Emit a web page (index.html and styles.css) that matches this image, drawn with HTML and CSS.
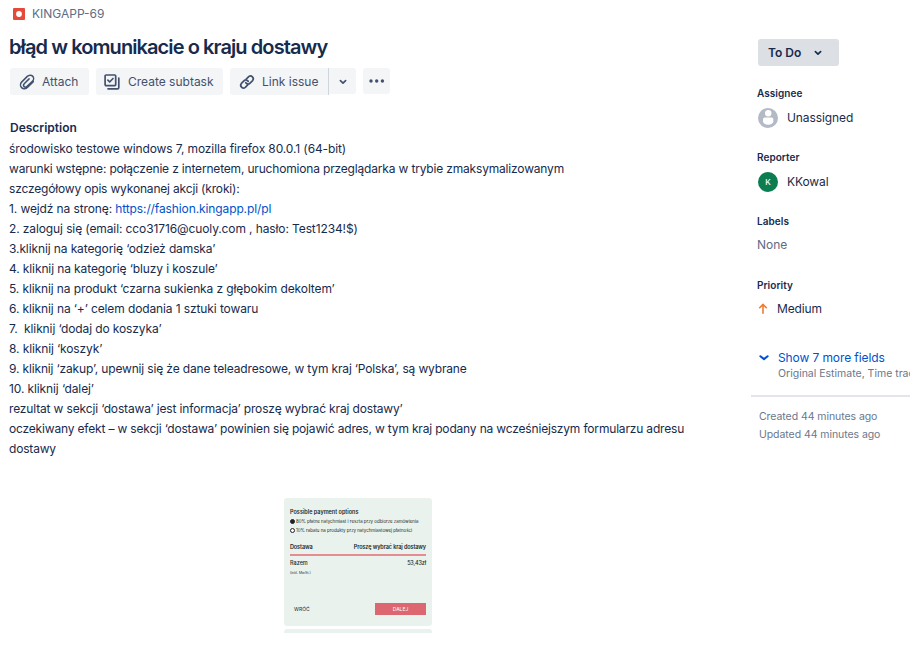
FILE: index.html
```html
<!DOCTYPE html>
<html lang="pl">
<head>
<meta charset="utf-8">
<title>KINGAPP-69</title>
<link rel="stylesheet" href="styles.css">
</head>
<body>
<div class="issue">
  <main class="main">
    <div class="crumb">
      <svg width="12" height="12" viewBox="0 0 12 12"><rect width="12" height="12" rx="1" fill="#e5493a"/><circle cx="6" cy="6" r="2.9" fill="#fff"/></svg>
      <span>KINGAPP-69</span>
    </div>
    <h1 class="title">błąd w komunikacie o kraju dostawy</h1>
    <div class="toolbar">
      <button class="btn attach">
        <svg width="16" height="16" viewBox="0 0 16 16"><path d="M14.300 7.600l-5.700 5.600c-1.700 1.700-4.400 2-6 .4s-1.400-4.100.2-5.700l5.500-5.500c1.500-1.500 3.900-1.700 5.300-.3s1.300 3.700-.2 5.200L8.100 12.400c-.9.9-2.200 1-3 .2s-.7-2 .1-2.800l4.900-4.900"/></svg>
        <span>Attach</span>
      </button>
      <button class="btn subtask">
        <svg width="16" height="16" viewBox="0 0 16 16"><rect x="1.100" y="1" width="10.600" height="10.600" rx="1"/><path d="m3.900 6.200 1.800 1.800L9 4.500M14.800 4.200v9.200c0 .9-.5 1.400-1.400 1.400H4"/></svg>
        <span>Create subtask</span>
      </button>
      <div class="split">
        <button class="btn link">
          <svg width="18" height="18" viewBox="0 0 24 24"><path d="m11 8.200 3.300-3.300a3.700 3.700 0 0 1 5.200 5.200l-3.400 3.400a3.700 3.700 0 0 1-5.200 0l-.5-.6M13 15.800l-3.300 3.300a3.700 3.700 0 0 1-5.200-5.200l3.400-3.400a3.700 3.700 0 0 1 5.200 0l.5.6"/></svg>
          <span>Link issue</span>
        </button>
        <button class="btn drop"><svg width="8" height="6" viewBox="0 0 8 6"><path d="m1.400 1.700 2.600 2.400 2.600-2.400"/></svg></button>
      </div>
      <button class="btn more"><svg width="16" height="4" viewBox="0 0 16 4"><circle cx="2" cy="2" r="1.700"/><circle cx="7.700" cy="2" r="1.700"/><circle cx="13.400" cy="2" r="1.700"/></svg></button>
    </div>
    <h2 class="heading">Description</h2>
    <div class="description">
      <p class="loose">środowisko testowe windows 7, mozilla firefox 80.0.1 (64-bit)</p>
      <p class="tight">warunki wstępne: połączenie z internetem, uruchomiona przeglądarka w trybie zmaksymalizowanym</p>
      <p class="tight">szczegółowy opis wykonanej akcji (kroki):</p>
      <p class="loose">1. wejdź na stronę: <a>https://fashion.kingapp.pl/pl</a></p>
      <p class="loose">2. zaloguj się (email: cco31716@cuoly.com , hasło: Test1234!$)</p>
      <p class="loose">3.kliknij na kategorię ‘odzież damska’</p>
      <p class="loose">4. kliknij na kategorię ‘bluzy i koszule’</p>
      <p class="loose">5. kliknij na produkt ‘czarna sukienka z głębokim dekoltem’</p>
      <p class="loose">6. kliknij na ‘+’ celem dodania 1 sztuki towaru</p>
      <p class="loose">7.&nbsp; kliknij ‘dodaj do koszyka’</p>
      <p class="loose">8. kliknij ‘koszyk’</p>
      <p>9. kliknij ‘zakup’, upewnij się że dane teleadresowe, w tym kraj ‘Polska’, są wybrane</p>
      <p class="loose">10. kliknij ‘dalej’</p>
      <p>rezultat w sekcji ‘dostawa’ jest informacja’ proszę wybrać kraj dostawy’</p>
      <p class="tight">oczekiwany efekt – w sekcji ‘dostawa’ powinien się pojawić adres, w tym kraj podany na wcześniejszym formularzu adresu<br>dostawy</p>
    </div>
    <div class="shot">
      <div class="pay">
        <div class="pay-title">Possible payment options</div>
        <div class="opt"><i class="radio on"></i><span>80% płatne natychmiast i reszta przy odbiorze zamówienia</span></div>
        <div class="opt"><i class="radio"></i><span>10% rabatu na produkty przy natychmiastowej płatności</span></div>
        <div class="pay-row delivery"><span>Dostawa</span><span>Proszę wybrać kraj dostawy</span></div>
        <div class="rule"></div>
        <div class="pay-row total"><span>Razem</span><span class="sum">53,43zł</span></div>
        <div class="vat">(inkl. MwSt.)</div>
        <div class="pay-foot"><span class="back">WRÓĆ</span><span class="next">DALEJ</span></div>
      </div>
      <div class="pay-next"></div>
    </div>
  </main>
  <aside class="side">
    <button class="status"><span>To Do</span><svg width="8" height="6" viewBox="0 0 8 6"><path d="m1.400 1.700 2.600 2.400 2.600-2.400"/></svg></button>
    <section class="field">
      <h3>Assignee</h3>
      <div class="person"><svg width="20" height="20" viewBox="0 0 20 20"><circle cx="10" cy="10" r="10" fill="#b3bac5"/><circle cx="10.200" cy="5.300" r="3.200" fill="#fff"/><path d="M5 11.300c0-1 .8-1.800 1.800-1.800h6.700c1 0 1.800.8 1.800 1.800v2.300c0 2-2.200 3.100-5.100 3.100S5 15.600 5 13.600z" fill="#fff"/></svg><span>Unassigned</span></div>
    </section>
    <section class="field">
      <h3>Reporter</h3>
      <div class="person"><b class="avatar">K</b><span>KKowal</span></div>
    </section>
    <section class="field">
      <h3>Labels</h3>
      <div class="none">None</div>
    </section>
    <section class="field">
      <h3>Priority</h3>
      <div class="prio"><svg width="10" height="12" viewBox="0 0 10 12"><path d="M5 10.300V1.600M1.700 4.700 5 1.400l3.300 3.300"/></svg><span>Medium</span></div>
    </section>
    <div class="show">
      <svg width="10" height="8" viewBox="0 0 10 8"><path d="m1.400 2.200 3.600 2.900 3.600-2.900"/></svg>
      <div><div class="show-link">Show 7 more fields</div><div class="show-sub">Original Estimate, Time tracking</div></div>
    </div>
    <div class="dates"><div>Created 44 minutes ago</div><div>Updated 44 minutes ago</div></div>
  </aside>
</div>
</body>
</html>
```
FILE: styles.css
```css
* { box-sizing: border-box; }
body { margin: 0; background: #fff; color: #172b4d; font: 12px/20px Inter, "Liberation Sans", sans-serif; overflow: hidden; }
h1, h2, h3, p { margin: 0; }
svg { display: block; flex: none; fill: none; stroke-linecap: round; stroke-linejoin: round; }
button { border: 0; font: inherit; color: inherit; padding: 0; }
.issue { display: flex; height: 661px; overflow: hidden; white-space: nowrap; }
.main { width: 751px; flex: none; padding: 4px 0 0 9px; }
.crumb { display: flex; align-items: center; gap: 7px; padding-left: 4px; height: 20px; color: #5e6c84; }
.title { margin-top: 10px; font-size: 20px; line-height: 26px; font-weight: 600; letter-spacing: -0.910px; }
.toolbar { display: flex; margin: 8px 0 0 1px; color: #42526e; height: 27px; letter-spacing: .06px; }
.btn { display: flex; align-items: center; height: 27px; border-radius: 3px; background: #f4f5f7; }
.btn svg { stroke: #42526e; stroke-width: 2.300; }
.attach { width: 79px; padding-left: 9px; gap: 7px; }
.btn.attach svg { stroke-width: 1.500; }
.subtask { width: 127px; margin-left: 7px; padding-left: 8px; gap: 8px; }
.btn.subtask svg { stroke-width: 1.700; }
.split { display: flex; margin-left: 7px; }
.link { width: 99px; padding-left: 8px; gap: 6px; border-radius: 3px 0 0 3px; border-right: 1px solid #d0d4db; }
.drop { width: 27px; height: 26px; justify-content: center; border-radius: 0 3px 3px 0; }
.btn.drop svg { stroke-width: 1.700; margin-top: 2px; }
.more { width: 27px; height: 26px; margin-left: 7px; justify-content: center; }
.btn.more svg { fill: #42526e; stroke: none; }
.heading { margin: 23px 0 0 1px; font-size: 12px; line-height: 20px; font-weight: 600; }
.description { margin-top: 1px; letter-spacing: -.15px; }
.description .loose { letter-spacing: -.11px; }
.description .tight { letter-spacing: -.175px; }
.description a { color: #0052cc; }
.shot { width: 148px; margin: 39px 0 0 275px; font-family: Inter, sans-serif; color: #222b2a; }
.pay { height: 128px; background: #e9f2ed; border-radius: 3px; padding: 10px 6px 0; }
.pay-title { font-size: 5.500px; line-height: 8px; font-weight: 600; margin-bottom: 1px; }
.opt { display: flex; align-items: center; gap: 1px; height: 9px; font-size: 4.400px; line-height: 9px; }
.radio { width: 5px; height: 5px; border: 1px solid #222; border-radius: 50%; background: #fff; flex: none; }
.radio.on { background: #222; }
.pay-row { display: flex; justify-content: space-between; font-size: 5.500px; line-height: 8px; font-weight: 500; }
.delivery { margin-top: 8px; height: 11px; font-weight: 600; letter-spacing: -.1px; }
.rule { height: 2px; background: #e58b92; }
.total { margin-top: 3px; }
.sum { letter-spacing: -.15px; }
.vat { font-size: 3.500px; line-height: 8px; margin-top: 2px; }
.pay-foot { display: flex; justify-content: space-between; margin-top: 26px; font-size: 5px; line-height: 12px; }
.back { margin-left: 4px; }
.next { width: 51px; height: 12px; background: #dc6770; color: #fff; text-align: center; }
.pay-next { height: 4px; margin-top: 3px; background: #e9f2ed; border-radius: 3px 3px 0 0; }
.side { width: 159px; flex: none; overflow: hidden; padding-top: 39px; }
.status { display: flex; align-items: center; justify-content: space-between; width: 81px; height: 27px; margin-left: 7px; padding: 0 17px 0 10px; border-radius: 3px; background: #dcdfe4; font-weight: 600; }
.status svg { stroke: #172b4d; stroke-width: 1.700; }
.field { height: 64px; padding-left: 6px; }
.status + .field { margin-top: 19px; }
.field h3 { font-size: 10px; line-height: 16px; font-weight: 600; letter-spacing: .05px; }
.person { display: flex; align-items: center; gap: 9px; height: 20px; margin: 7px 0 0 1px; letter-spacing: -.1px; }
.avatar { width: 20px; height: 20px; border-radius: 50%; background: #0b7d50; color: #fff; text-align: center; font-size: 8px; font-weight: 500; }
.none { color: #5e6c84; margin-top: 6px; }
.prio { display: flex; align-items: center; gap: 9px; margin: 6px 0 0 1px; letter-spacing: -.15px; }
.prio svg { stroke: #ed7d31; stroke-width: 1.600; }
.show { display: flex; gap: 9px; margin: 7px 0 0 8px; }
.show svg { margin-top: 6px; stroke: #0052cc; stroke-width: 2; }
.show-link { color: #0052cc; letter-spacing: -.1px; }
.show-sub { font-size: 10.500px; line-height: 12px; color: #6b778c; }
.dates { margin-top: 15px; border-top: 2px solid #e4e5ec; padding: 11px 0 0 8px; font-size: 10.500px; line-height: 18px; color: #6b778c; letter-spacing: -.06px; }
```
